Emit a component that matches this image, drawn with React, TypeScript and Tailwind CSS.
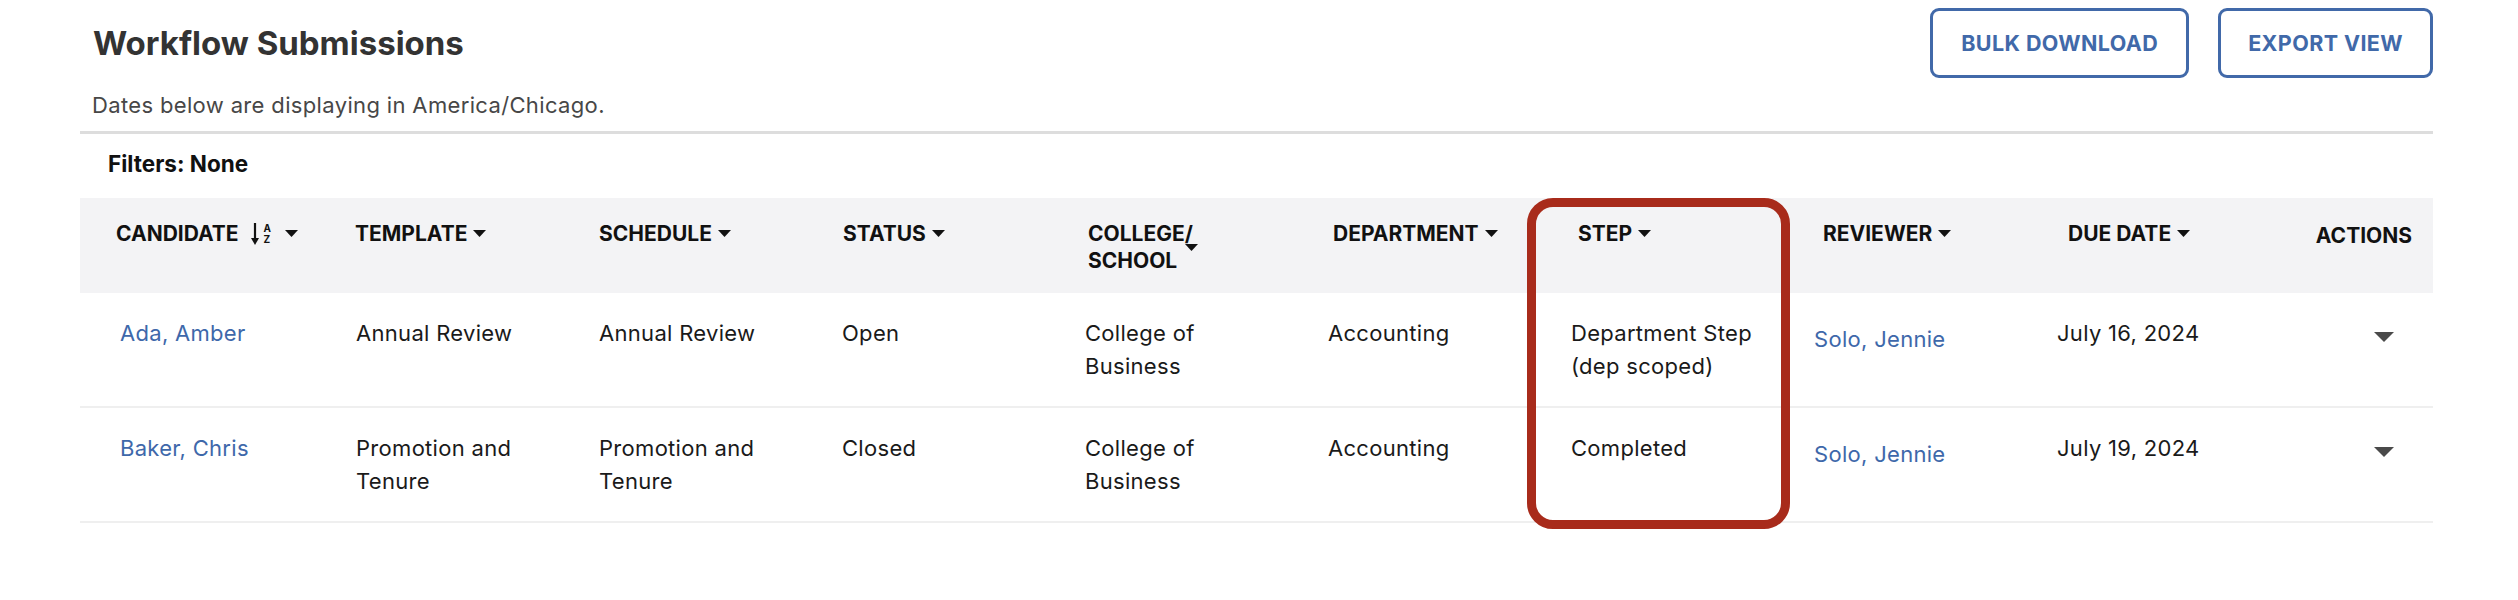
import React from "react";

const Caret = () => (
  <svg width="13" height="7" viewBox="0 0 13 7" className="shrink-0">
    <path d="M0 0h13L6.5 7z" fill="#111" />
  </svg>
);

const SortIcon = () => (
  <span className="ml-[12px] flex items-center">
    <svg width="8" height="22" viewBox="0 0 8 22">
      <path d="M4 0v17" stroke="#111" strokeWidth="2.2" />
      <path d="M0 15l4 7 4-7z" fill="#111" />
    </svg>
    <span className="ml-[5px] flex flex-col text-[10px] font-bold leading-[11px] text-[#111]">
      <span>A</span>
      <span>Z</span>
    </span>
  </span>
);

const HeadCell = ({ label, first }: { label: string; first?: boolean }) => (
  <div className={`flex items-center ${first ? "pl-[36px]" : "pl-[16px]"}`}>
    <span className="whitespace-nowrap">{label}</span>
    {first ? (
      <>
        <SortIcon />
        <span className="ml-[14px]">
          <Caret />
        </span>
      </>
    ) : (
      <span className="ml-[6px]">
        <Caret />
      </span>
    )}
  </div>
);

type Row = {
  candidate: string;
  template: string[];
  schedule: string[];
  status: string;
  college: string[];
  department: string;
  step: string[];
  reviewer: string;
  due: string;
};

const rows: Row[] = [
  {
    candidate: "Ada, Amber",
    template: ["Annual Review"],
    schedule: ["Annual Review"],
    status: "Open",
    college: ["College of", "Business"],
    department: "Accounting",
    step: ["Department Step", "(dep scoped)"],
    reviewer: "Solo, Jennie",
    due: "July 16, 2024",
  },
  {
    candidate: "Baker, Chris",
    template: ["Promotion and", "Tenure"],
    schedule: ["Promotion and", "Tenure"],
    status: "Closed",
    college: ["College of", "Business"],
    department: "Accounting",
    step: ["Completed"],
    reviewer: "Solo, Jennie",
    due: "July 19, 2024",
  },
];

const Lines = ({ lines }: { lines: string[] }) => (
  <div className="pl-[16px]">
    {lines.map((l, i) => (
      <div key={i} className="whitespace-nowrap">
        {l}
      </div>
    ))}
  </div>
);

export default function App() {
  return (
    <div className="min-h-[600px] w-[2518px] bg-white pl-[80px] pr-[85px] font-[Inter,sans-serif]">
      <div className="flex items-start justify-between">
        <div className="pt-[23px]">
          <h1 className="pl-[13px] text-[33px] font-bold leading-[40px] text-[#333333]">
            Workflow Submissions
          </h1>
          <p className="mt-[27px] pl-[12px] text-[22px] leading-[30px] tracking-[0.35px] text-[#474747]">
            Dates below are displaying in America/Chicago.
          </p>
        </div>
        <div className="mt-[8px] flex gap-[29px]">
          <button className="flex h-[70px] items-center rounded-[9px] border-[3px] border-[#4169a9] px-[28px] text-[21.5px] font-bold tracking-[0.4px] text-[#4169a9]">
            BULK DOWNLOAD
          </button>
          <button className="flex h-[70px] items-center rounded-[9px] border-[3px] border-[#4169a9] px-[27px] text-[21.5px] font-bold tracking-[0.4px] text-[#4169a9]">
            EXPORT VIEW
          </button>
        </div>
      </div>

      <div className="mt-[11px] h-[3px] bg-[#dddddd]" />

      <div className="mt-[16px] pl-[28px] text-[22.5px] font-bold leading-[27px] text-[#111]">
        Filters: None
      </div>

      <div className="relative mt-[21px]">
        <div className="grid h-[95px] grid-cols-[259px_244px_244px_245px_245px_245px_245px_245px_245px_1fr] items-start bg-[#f3f3f5] pt-[22px] text-[21px] font-bold uppercase leading-[27px] text-[#111]">
          <HeadCell label="CANDIDATE" first />
          <HeadCell label="TEMPLATE" />
          <HeadCell label="SCHEDULE" />
          <HeadCell label="STATUS" />
          <div className="flex items-center pl-[16px]">
            <div className="w-[97px] whitespace-nowrap">
              <div>COLLEGE/</div>
              <div>SCHOOL</div>
            </div>
            <Caret />
          </div>
          <HeadCell label="DEPARTMENT" />
          <HeadCell label="STEP" />
          <HeadCell label="REVIEWER" />
          <HeadCell label="DUE DATE" />
          <div className="pr-[21px] pt-[2px] text-right">ACTIONS</div>
        </div>

        {rows.map((r, i) => (
          <div
            key={i}
            className="grid h-[115px] grid-cols-[260px_243px_243px_243px_243px_243px_243px_243px_243px_1fr] items-start border-b-[2px] border-[#efefef] pt-[24px] text-[22px] leading-[33px] tracking-[0.3px] text-[#1a1a1a]"
          >
            <div className="pl-[40px]">
              <a className="whitespace-nowrap text-[#3e68aa]">{r.candidate}</a>
            </div>
            <Lines lines={r.template} />
            <Lines lines={r.schedule} />
            <Lines lines={[r.status]} />
            <Lines lines={r.college} />
            <Lines lines={[r.department]} />
            <Lines lines={r.step} />
            <div className="pl-[16px] pt-[6px]">
              <a className="whitespace-nowrap text-[#3e68aa]">{r.reviewer}</a>
            </div>
            <Lines lines={[r.due]} />
            <div className="flex h-[33px] items-center justify-end pr-[39px] pt-[6px]">
              <svg width="20" height="10" viewBox="0 0 20 10">
                <path d="M0 0h20L10 10z" fill="#4a4a4a" />
              </svg>
            </div>
          </div>
        ))}

        <div className="pointer-events-none absolute left-[1447px] top-0 h-[331px] w-[263px] rounded-[26px] border-[9px] border-[#a82b1b]" />
      </div>
    </div>
  );
}
